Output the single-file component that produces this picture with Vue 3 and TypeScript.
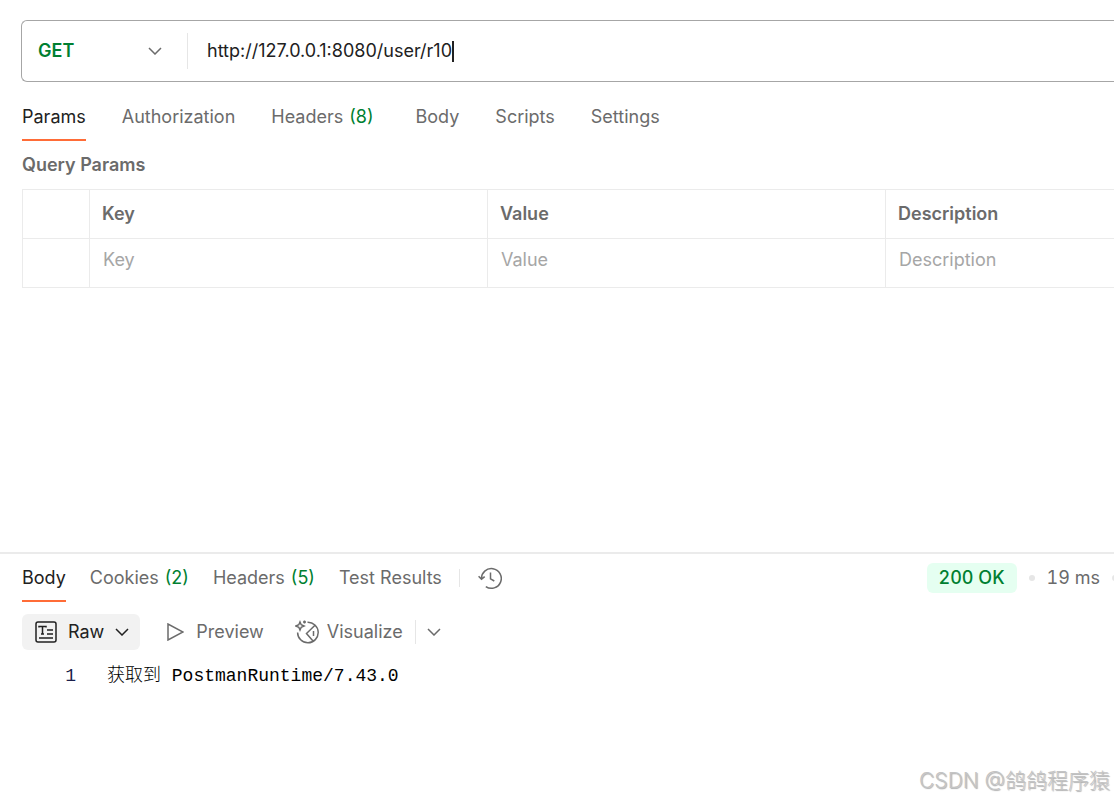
<script setup lang="ts">
import { ref } from 'vue'

interface Tab {
  name: string
  count?: number
}

const requestTabs: Tab[] = [
  { name: 'Params' },
  { name: 'Authorization' },
  { name: 'Headers', count: 8 },
  { name: 'Body' },
  { name: 'Scripts' },
  { name: 'Settings' },
]
const responseTabs: Tab[] = [
  { name: 'Body' },
  { name: 'Cookies', count: 2 },
  { name: 'Headers', count: 5 },
  { name: 'Test Results' },
]
const columns: string[] = ['Key', 'Value', 'Description']

const url = ref('http://127.0.0.1:8080/user/r10')
const activeRequest = ref('Params')
const activeResponse = ref('Body')
</script>

<template>
  <main class="page">
    <section class="request">
      <form class="url-bar" @submit.prevent>
        <div class="method">
          <select aria-label="HTTP method">
            <option>GET</option>
            <option>POST</option>
          </select>
          <svg class="chevron" viewBox="0 0 14 8"><path d="M1 1l6 6 6-6" /></svg>
        </div>
        <div class="url">
          <input v-model="url" class="url-input" type="text" aria-label="Request URL" spellcheck="false" />
          <span class="caret"></span>
        </div>
      </form>

      <nav class="tabs request-tabs">
        <button
          v-for="tab in requestTabs"
          :key="tab.name"
          type="button"
          :class="{ active: tab.name === activeRequest, counted: tab.count }"
          @click="activeRequest = tab.name"
        >
          {{ tab.name }}<span v-if="tab.count" class="count">({{ tab.count }})</span>
        </button>
      </nav>

      <h2>Query Params</h2>
      <table>
        <thead>
          <tr>
            <th class="check"></th>
            <th v-for="c in columns" :key="c" scope="col" :class="c.toLowerCase()">{{ c }}</th>
          </tr>
        </thead>
        <tbody>
          <tr>
            <td class="check"></td>
            <td v-for="c in columns" :key="c"><input type="text" :placeholder="c" :aria-label="c" /></td>
          </tr>
        </tbody>
      </table>
    </section>

    <section class="response">
      <header class="response-head">
        <nav class="tabs response-tabs">
          <button
            v-for="tab in responseTabs"
            :key="tab.name"
            type="button"
            :class="{ active: tab.name === activeResponse }"
            @click="activeResponse = tab.name"
          >
            {{ tab.name }}<span v-if="tab.count" class="count">({{ tab.count }})</span>
          </button>
        </nav>
        <span class="rule short"></span>
        <button type="button" class="history" aria-label="Response history">
          <svg viewBox="0 0 24 24">
            <path d="M3.500 13A9.900 9.900 0 1 1 7.800 20.600M.6 10.300l2.900 2.900 3.200-2.600M12.500 6.500v6.300l3.800 2.200" />
          </svg>
        </button>
        <div class="status">
          <span class="badge">200 OK</span>
          <span class="dot"></span>
          <span class="time">19 ms</span>
          <span class="dot"></span>
        </div>
      </header>

      <div class="toolbar">
        <button type="button" class="raw">
          <svg class="raw-icon" viewBox="0 0 22 22">
            <rect x="1" y="1" width="20" height="20" rx="2" />
            <path d="M4 6.500V5.500h7v1M7.500 5.500v7.500M6 13h3M12 9h6M12 13h6M4 17h14" />
          </svg>
          <span>Raw</span>
          <svg class="chevron" viewBox="0 0 14 8"><path d="M1 1l6 6 6-6" /></svg>
        </button>
        <button type="button" class="preview">
          <svg class="play" viewBox="0 0 17 18"><path d="M1 1v16l15-8z" /></svg>
          <span>Preview</span>
        </button>
        <button type="button" class="visualize">
          <svg class="visual-icon" viewBox="0 0 24 24">
            <path d="M12.500 2.200A10.300 10.300 0 1 1 2.600 12.500M20 5.200l-8.500 8.300 6.500 7.500M18.500 11v5" />
            <path d="M5 2l1.200 2.800L9 6 6.200 7.200 5 10 3.800 7.200 1 6l2.800-1.200zM9.500 .5v3M8 2h3" />
          </svg>
          <span>Visualize</span>
        </button>
        <span class="rule"></span>
        <button type="button" class="more" aria-label="More views">
          <svg class="chevron" viewBox="0 0 14 8"><path d="M1 1l6 6 6-6" /></svg>
        </button>
      </div>

      <div class="code">
        <span class="line-number">1</span>
        <code>获取到 PostmanRuntime/7.43.0</code>
      </div>
    </section>

    <footer>CSDN @鸽鸽程序猿</footer>
  </main>
</template>

<style>
body {
  margin: 0;
  background: #fff;
}
</style>

<style scoped>
* {
  box-sizing: border-box;
}
.page {
  display: flex;
  flex-direction: column;
  min-height: 100vh;
  overflow: hidden;
  font: 18px/24px Inter, 'Noto Sans CJK SC', sans-serif;
  color: #6b6b6b;
}
button,
input,
select {
  font: inherit;
  color: inherit;
  background: none;
  border: 0;
  padding: 0;
  margin: 0;
  outline: 0;
}
svg {
  flex: none;
  fill: none;
  stroke: currentColor;
  stroke-width: 1.5;
}
.request {
  min-height: 552px;
  padding: 20px 0 0 22px;
}
.url-bar {
  display: flex;
  align-items: center;
  height: 62px;
  margin-left: -1px;
  border: 1px solid #a6a6a6;
  border-right: 0;
  border-radius: 6px 0 0 6px;
}
.method {
  display: flex;
  align-items: center;
  width: 166px;
  height: 36px;
  padding: 0 25px 0 16px;
  border-right: 1px solid #e6e6e6;
}
.method select {
  flex: 1;
  appearance: none;
  color: #007f31;
  font-weight: 600;
}
.chevron {
  width: 14px;
  height: 8px;
}
.url {
  display: flex;
  align-items: center;
  flex: 1;
  padding-left: 19px;
  color: #212121;
}
.url-input {
  field-sizing: content;
}
.caret {
  width: 2px;
  height: 21px;
  background: #212121;
}
.tabs {
  display: flex;
}
.tabs button {
  border-bottom: 2px solid transparent;
  white-space: nowrap;
}
.tabs .active {
  color: #212121;
  border-color: #ff6c37;
}
.count {
  margin-left: 6px;
  color: #007f31;
}
.request-tabs {
  gap: 36px;
  margin-top: 18px;
}
.request-tabs button {
  height: 41px;
  padding-bottom: 6px;
}
.request-tabs .counted {
  margin-right: 6px;
}
h2 {
  margin: 12px 0;
  font-size: 18px;
  font-weight: 600;
  line-height: 24px;
}
table {
  width: 100%;
  table-layout: fixed;
  border-collapse: collapse;
}
th,
td {
  height: 49px;
  padding: 0 12px;
  border: 1px solid #ebebeb;
  text-align: left;
}
th {
  font-weight: 600;
}
th:last-child,
td:last-child {
  border-right: 0;
}
.check {
  width: 67px;
}
.key,
.value {
  width: 398px;
}
td {
  padding: 0 13px 6px;
}
td input {
  display: block;
  width: 100%;
}
td input::placeholder {
  color: #a6a6a6;
  opacity: 1;
}
.response {
  flex: 1;
  padding-left: 22px;
  border-top: 2px solid #ebebeb;
}
.response-head {
  display: flex;
  align-items: center;
  height: 48px;
}
.response-tabs {
  gap: 24px;
}
.response-tabs button {
  height: 48px;
  padding-top: 2px;
}
.rule {
  width: 1px;
  height: 24px;
  background: #e6e6e6;
}
.short {
  height: 18px;
  margin: 0 18px 0 17px;
}
.history svg {
  display: block;
  width: 24px;
  height: 24px;
}
.status {
  display: flex;
  align-items: center;
  flex: none;
  margin: 0 -4px 0 auto;
  font-variant-numeric: tabular-nums;
}
.badge {
  padding: 3px 12px;
  border-radius: 6px;
  background: #e5fff1;
  color: #007f31;
  font-weight: 500;
}
.dot {
  width: 6px;
  height: 6px;
  margin: 0 12px;
  border-radius: 50%;
  background: #e6e6e6;
}
.dot:last-child {
  margin-right: 0;
}
.toolbar {
  display: flex;
  align-items: center;
  height: 36px;
  margin-top: 12px;
}
.toolbar button {
  display: flex;
  align-items: center;
}
.toolbar .raw {
  height: 36px;
  gap: 11px;
  padding: 0 11px 0 13px;
  border-radius: 6px;
  background: #f2f2f2;
  color: #212121;
}
.raw-icon {
  width: 22px;
  height: 22px;
}
.preview {
  gap: 12px;
  margin-left: 27px;
}
.play {
  width: 17px;
  height: 18px;
}
.visualize {
  gap: 8px;
  margin: 0 12px 0 31px;
}
.visual-icon {
  width: 24px;
  height: 24px;
}
.more {
  margin-left: 11px;
}
.code {
  display: flex;
  margin-top: 14px;
  color: #000;
  font-family: 'Liberation Mono', 'Noto Sans CJK SC', monospace;
}
.line-number {
  width: 54px;
  margin-right: 31px;
  text-align: right;
  color: #1b1f4b;
}
code {
  font-family: inherit;
  font-weight: 300;
}
footer {
  padding: 0 4px 6px;
  text-align: right;
  font-size: 21px;
  font-weight: 300;
  line-height: 28px;
  color: #c4c4c4;
  text-shadow: 1px 1px 1px #b0b0b0;
}
</style>
